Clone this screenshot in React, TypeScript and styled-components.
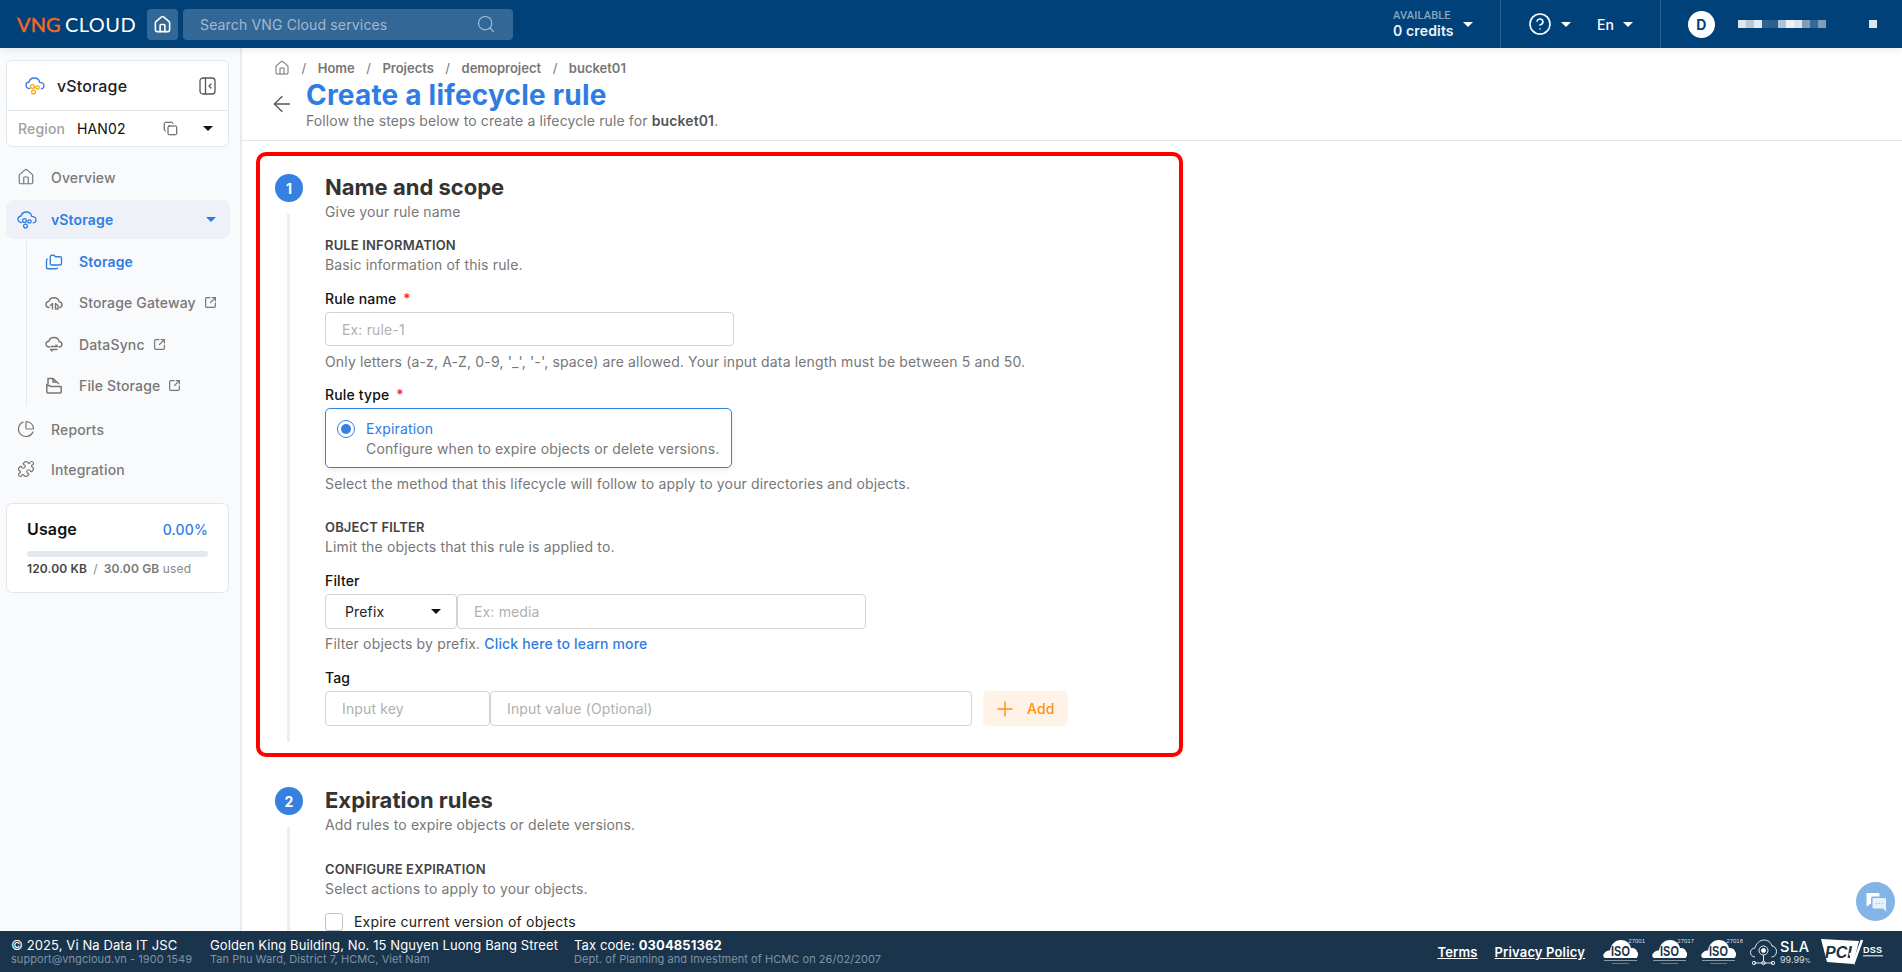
import React from "react";
import styled, { createGlobalStyle } from "styled-components";
import {
  ArrowLeft,
  ChartPie,
  CircleHelp,
  Copy,
  Folders,
  House,
  Plus,
  Puzzle,
  Search,
  SquareArrowOutUpRight,
} from "lucide-react";

const GlobalStyle = createGlobalStyle`
  html, body {
    margin: 0;
    padding: 0;
    height: 100%;
    overflow: hidden;
    background: #fff;
    font-family: Inter, "Noto Sans", sans-serif;
    letter-spacing: 0.15px;
    color: #333;
  }
  * { box-sizing: border-box; }
`;

const blurCells = ["#dfe6ee", "#b9c8d8", "#e5eaf0", "#2f6396", "#2b6090", "#b1c3d6", "#eef1f5", "#dbe3ec", "#7f9cb9", "#356895", "#7f9cb9"];

const VStorageIcon = ({ color = "#2f7de1", dots = "#f5a21b" }: { color?: string; dots?: string }) => (
  <svg width="20" height="20" viewBox="0 0 20 20" fill="none">
    <path d="M4.500 12.500C2.500 12.300 1 10.900 1 9.200 1 7.500 2.300 6.200 4 6 4.700 3.600 6.800 2 9.300 2c2.700 0 4.900 1.800 5.400 4.300 2.300 0 4.300 1.500 4.300 3.500 0 1.600-1.100 2.800-2.700 3" stroke={color} strokeWidth="1.300" strokeLinecap="round" />
    <circle cx="7.500" cy="10.500" r="1.900" stroke={dots} strokeWidth="1.300" />
    <circle cx="12.500" cy="11.500" r="1.700" stroke={dots} strokeWidth="1.300" />
    <circle cx="8.500" cy="16" r="1.900" stroke={dots} strokeWidth="1.300" />
  </svg>
);

const CollapseIcon = () => (
  <svg width="17" height="18" viewBox="0 0 17 18" fill="none" stroke="#555" strokeWidth="1.300">
    <rect x="1" y="1" width="15" height="16" rx="3" />
    <path d="M6.500 1v16" />
    <path d="M12 7l-2 2 2 2" strokeLinecap="round" strokeLinejoin="round" />
  </svg>
);

const GatewayIcon = () => (
  <svg width="18" height="18" viewBox="0 0 18 18" fill="none" stroke="#777" strokeWidth="1.400" strokeLinecap="round" strokeLinejoin="round">
    <path d="M4 13.500C2.300 13.300 1 12 1 10.400 1 8.800 2.300 7.500 3.900 7.400 4.500 5.200 6.500 3.700 8.900 3.700c2.700 0 4.900 1.800 5.300 4.100 1.600.2 2.800 1.400 2.800 3 0 1.400-.9 2.400-2.200 2.700" />
    <path d="M7.500 15V9.500l-2 2M10.500 9.500V15h2.500v-3.500z" />
  </svg>
);

const SyncIcon = () => (
  <svg width="18" height="18" viewBox="0 0 18 18" fill="none" stroke="#777" strokeWidth="1.400" strokeLinecap="round" strokeLinejoin="round">
    <path d="M4.500 12C2.500 12 1 10.700 1 9.100 1 7.500 2.300 6.300 3.900 6.200 4.500 4 6.500 2.500 8.900 2.500c2.700 0 4.900 1.800 5.300 4.100 1.600.2 2.800 1.300 2.800 2.700 0 1.500-1.200 2.700-3 2.700" />
    <path d="M6 11.500h6.500l-1.500-1.500M12 14.500H5.500l1.500 1.500" />
  </svg>
);

const FileStorageIcon = () => (
  <svg width="18" height="18" viewBox="0 0 18 18" fill="none" stroke="#777" strokeWidth="1.500" strokeLinejoin="round">
    <path d="M3 8V2.500h5L14 8" />
    <path d="M8 2.500V6h3.500" />
    <path d="M1.800 8.500 6 10.500h10.200v5.500a1 1 0 0 1-1 1H2.800a1 1 0 0 1-1-1z" />
  </svg>
);

const ChatIcon = () => (
  <svg width="22" height="20" viewBox="0 0 22 20">
    <path d="M1.500 1h12a1 1 0 0 1 1 1v2.500H8a2 2 0 0 0-2 2V12H5l-3.500 2.800V2a1 1 0 0 1 0-1z" fill="#fff" />
    <path d="M8.500 6h11.500a1 1 0 0 1 1 1v9.500l.5 3-3.500-3H8.500a1 1 0 0 1-1-1V7a1 1 0 0 1 1-1z" fill="#e8f1fb" />
    <circle cx="11.500" cy="11.500" r=".8" fill="#9cc2ec" />
    <circle cx="14.500" cy="11.500" r=".8" fill="#9cc2ec" />
    <circle cx="17.500" cy="11.500" r=".8" fill="#9cc2ec" />
  </svg>
);

const IsoBadge = ({ code }: { code: string }) => (
  <svg width="42" height="30" viewBox="0 0 42 30">
    <path d="M2.500 21C0 21-.5 17.500 1.500 16 3 14 5 13.500 7 13.500 8 7.500 12 3 18 3c5 0 9 3 10 8 3-.5 5.500 1 6 3.500 1.500 1 1.500 5-.5 6.500z" fill="#fff" />
    <text x="17.500" y="19" textAnchor="middle" fontFamily="'Liberation Sans', sans-serif" fontSize="15" fontWeight="700" fill="#1a344b" textLength="19" lengthAdjust="spacingAndGlyphs">ISO</text>
    <text x="42" y="6" textAnchor="end" fontFamily="'Liberation Sans', sans-serif" fontSize="6" fill="#d8dee4" letterSpacing="0">{code}</text>
    <rect x="1" y="23" width="33" height="1" fill="#8a9aa8" />
    <rect x="9" y="26" width="17" height="1" fill="#66798a" />
  </svg>
);

const SlaBadge = () => (
  <svg width="64" height="30" viewBox="0 0 64 30" fill="none" stroke="#fff" strokeWidth=".9">
    <path d="M5 20C2.500 20 .5 18 .5 15.500S2.500 11 5 11c1-4.500 5-8 9-8s7 2.500 8 6c2.500 0 4.500 2.500 4.500 5.500s-2 5.500-5 5.500" />
    <circle cx="13.500" cy="13.500" r="4.500" />
    <circle cx="13.500" cy="13.500" r="2" fill="#fff" />
    <path d="M13.500 18v6M4 26h19" />
    <circle cx="4" cy="26" r="1.700" />
    <circle cx="13.500" cy="26" r="1.700" />
    <circle cx="23" cy="26" r="1.700" />
    <text x="30" y="15" fontFamily="Inter, sans-serif" fontSize="14.500" fontWeight="500" fill="#fff" stroke="none" letterSpacing=".6">SLA</text>
    <text x="30" y="26" fontFamily="Inter, sans-serif" fontSize="9" fill="#d2dae1" stroke="none" letterSpacing="0">99.99<tspan fontSize="6">%</tspan></text>
  </svg>
);

const PciBadge = () => (
  <svg width="64" height="28" viewBox="0 0 64 28">
    <path d="M0 1 L38 3 L32 26 L6 24z" fill="#fff" />
    <text x="4" y="20" fontFamily="'Liberation Sans', sans-serif" fontSize="16" fontWeight="700" fontStyle="italic" fill="#1a344b" letterSpacing="0">PCI</text>
    <path d="M29 15l4 9 L41 2" stroke="#fff" strokeWidth="2.500" fill="none" />
    <text x="42" y="15" fontFamily="'Liberation Sans', sans-serif" fontSize="9" fontWeight="700" fill="#fff" letterSpacing=".2">DSS</text>
    <rect x="42" y="17" width="20" height="1.500" fill="#b6c1cb" />
  </svg>
);

export default function App() {
  return (
    <>
      <GlobalStyle />
      <Page>
        <TopBar>
          <Logo><LogoMark>VNG</LogoMark><LogoWord>CLOUD</LogoWord></Logo>
          <HomeButton><House size={19} strokeWidth={2} /></HomeButton>
          <SearchBox>
            <SearchText>Search VNG Cloud services</SearchText>
            <Search size={20} strokeWidth={1.4} color="#a9bfd4" />
          </SearchBox>
          <TopRight>
            <CreditBlock>
              <Credits>
                <CreditLabel>AVAILABLE</CreditLabel>
                <CreditValue>0 credits</CreditValue>
              </Credits>
              <Caret $color="#fff" $size={5} />
            </CreditBlock>
            <HelpBlock>
              <CircleHelp size={24} strokeWidth={1.6} color="#fff" />
              <Caret $color="#fff" $size={5} />
              <Lang>En</Lang>
              <Caret $color="#fff" $size={5} />
            </HelpBlock>
            <UserBlock>
              <Avatar>D</Avatar>
              <BlurName>
                {blurCells.map((c, i) => <BlurCell key={i} $color={c} />)}
              </BlurName>
              <BlurDot />
            </UserBlock>
          </TopRight>
        </TopBar>

        <Body>
          <Sidebar>
            <ServiceCard>
              <ServiceHead>
                <VStorageIcon />
                <ServiceName>vStorage</ServiceName>
                <CollapseIcon />
              </ServiceHead>
              <RegionRow>
                <RegionLabel>Region</RegionLabel>
                <RegionValue>HAN02</RegionValue>
                <CopyWrap><Copy size={15} strokeWidth={1.6} color="#444" /></CopyWrap>
                <Caret $color="#111" $size={5} />
              </RegionRow>
            </ServiceCard>

            <Nav>
              <NavItem><House size={18} strokeWidth={1.6} /><NavText>Overview</NavText></NavItem>
              <ActiveItem>
                <VStorageIcon dots="#2f7de1" />
                <ActiveText>vStorage</ActiveText>
                <Caret $color="#2f7de1" $size={5} />
              </ActiveItem>
              <SubNav>
                <SubItem $active><Folders size={18} strokeWidth={1.8} /><span>Storage</span></SubItem>
                <SubItem><GatewayIcon /><span>Storage Gateway</span><SquareArrowOutUpRight size={13} strokeWidth={2.2} /></SubItem>
                <SubItem><SyncIcon /><span>DataSync</span><SquareArrowOutUpRight size={13} strokeWidth={2.2} /></SubItem>
                <SubItem><FileStorageIcon /><span>File Storage</span><SquareArrowOutUpRight size={13} strokeWidth={2.2} /></SubItem>
              </SubNav>
              <NavItem><ChartPie size={18} strokeWidth={1.6} /><NavText>Reports</NavText></NavItem>
              <NavItem><Puzzle size={18} strokeWidth={1.6} /><NavText>Integration</NavText></NavItem>
            </Nav>

            <UsageCard>
              <UsageHead>
                <UsageTitle>Usage</UsageTitle>
                <UsagePercent>0.00%</UsagePercent>
              </UsageHead>
              <UsageBar />
              <UsageText><b>120.00 KB</b><i>/</i><em>30.00 GB</em> used</UsageText>
            </UsageCard>
          </Sidebar>

          <Main>
            <PageHead>
              <Breadcrumb>
                <House size={16} strokeWidth={1.6} />
                <Slash>/</Slash><span>Home</span>
                <Slash>/</Slash><span>Projects</span>
                <Slash>/</Slash><span>demoproject</span>
                <Slash>/</Slash><span>bucket01</span>
              </Breadcrumb>
              <TitleRow>
                <BackArrow><ArrowLeft size={26} strokeWidth={1.2} /></BackArrow>
                <div>
                  <PageTitle>Create a lifecycle rule</PageTitle>
                  <PageSub>Follow the steps below to create a lifecycle rule for <b>bucket01</b>.</PageSub>
                </div>
              </TitleRow>
            </PageHead>

            <StepFrame $highlight>
              <Rail>
                <StepNumber>1</StepNumber>
                <RailLine />
              </Rail>
              <StepBody>
                <StepTitle>Name and scope</StepTitle>
                <Help>Give your rule name</Help>

                <SectionLabel $top={13}>RULE INFORMATION</SectionLabel>
                <Help>Basic information of this rule.</Help>

                <FieldLabel $top={14}>Rule name<Required>*</Required></FieldLabel>
                <TextInput $width={409} $height={34} placeholder="Ex: rule-1" readOnly />
                <Hint $top={6}>Only letters (a-z, A-Z, 0-9, '_', '-', space) are allowed. Your input data length must be between 5 and 50.</Hint>

                <FieldLabel $top={13}>Rule type<Required>*</Required></FieldLabel>
                <RadioCard>
                  <RadioOuter><RadioDot /></RadioOuter>
                  <div>
                    <RadioTitle>Expiration</RadioTitle>
                    <RadioText>Configure when to expire objects or delete versions.</RadioText>
                  </div>
                </RadioCard>
                <Hint $top={6}>Select the method that this lifecycle will follow to apply to your directories and objects.</Hint>

                <SectionLabel $top={23}>OBJECT FILTER</SectionLabel>
                <Help>Limit the objects that this rule is applied to.</Help>

                <FieldLabel $top={14}>Filter</FieldLabel>
                <InputRow>
                  <SelectBox>
                    <span>Prefix</span>
                    <Caret $color="#111" $size={5} />
                  </SelectBox>
                  <TextInput $width={409} $height={35} placeholder="Ex: media" readOnly />
                </InputRow>
                <Hint $top={5}>Filter objects by prefix. <LearnLink>Click here to learn more</LearnLink></Hint>

                <FieldLabel $top={14}>Tag</FieldLabel>
                <InputRow>
                  <TextInput $width={165} $height={35} placeholder="Input key" readOnly />
                  <TextInput $width={482} $height={35} placeholder="Input value (Optional)" readOnly />
                  <AddButton><Plus size={24} strokeWidth={1.4} /><span>Add</span></AddButton>
                </InputRow>
              </StepBody>
            </StepFrame>

            <StepFrame $below>
              <Rail>
                <StepNumber>2</StepNumber>
                <RailLine />
              </Rail>
              <StepBody>
                <StepTitle>Expiration rules</StepTitle>
                <Help>Add rules to expire objects or delete versions.</Help>
                <SectionLabel $top={24}>CONFIGURE EXPIRATION</SectionLabel>
                <Help>Select actions to apply to your objects.</Help>
                <CheckRow>
                  <CheckBox />
                  <CheckText>Expire current version of objects</CheckText>
                </CheckRow>
              </StepBody>
            </StepFrame>
          </Main>
        </Body>

        <Footer>
          <FootCol $width={199}>
            <FootMain>© 2025, Vi Na Data IT JSC</FootMain>
            <FootSub>support@vngcloud.vn - 1900 1549</FootSub>
          </FootCol>
          <FootCol $width={364}>
            <FootMain>Golden King Building, No. 15 Nguyen Luong Bang Street</FootMain>
            <FootSub>Tan Phu Ward, District 7, HCMC, Viet Nam</FootSub>
          </FootCol>
          <FootCol $width={340}>
            <FootMain>Tax code: <b>0304851362</b></FootMain>
            <FootSub>Dept. of Planning and Investment of HCMC on 26/02/2007</FootSub>
          </FootCol>
          <FootRight>
            <FootLink>Terms</FootLink>
            <FootLink>Privacy Policy</FootLink>
            <Badges>
              <IsoBadge code="27001" />
              <IsoBadge code="27017" />
              <IsoBadge code="27018" />
              <SlaBadge />
              <PciBadge />
            </Badges>
          </FootRight>
        </Footer>

        <ChatBubble><ChatIcon /></ChatBubble>
      </Page>
    </>
  );
}

const Page = styled.div`
  position: relative;
  display: flex;
  flex-direction: column;
  width: 1902px;
  height: 972px;
  overflow: hidden;
`;

const TopBar = styled.header`
  display: flex;
  align-items: center;
  flex: 0 0 48px;
  background: #01417a;
  padding-left: 17px;
  box-shadow: 0 2px 8px rgba(0, 0, 0, 0.08);
  z-index: 2;
`;

const Logo = styled.div`
  display: flex;
  align-items: baseline;
  gap: 4px;
  width: 130px;
  font-family: Lato, sans-serif;
  font-size: 20px;
  line-height: 24px;
`;

const LogoMark = styled.span`
  color: #f26a21;
  font-weight: 400;
  -webkit-text-stroke: 0.4px #f26a21;
`;

const LogoWord = styled.span`
  color: #fff;
  font-weight: 400;
  letter-spacing: 0.5px;
`;

const HomeButton = styled.div`
  display: flex;
  align-items: center;
  justify-content: center;
  width: 31px;
  height: 31px;
  background: #336795;
  border-radius: 4px;
  color: #fff;
`;

const SearchBox = styled.div`
  display: flex;
  align-items: center;
  justify-content: space-between;
  width: 330px;
  height: 31px;
  margin-left: 5px;
  padding: 0 17px;
  background: #336795;
  border-radius: 4px;
`;

const SearchText = styled.span`
  font-size: 14px;
  color: #a3b9ce;
`;

const TopRight = styled.div`
  display: flex;
  align-items: stretch;
  height: 48px;
  margin-left: auto;
`;

const CreditBlock = styled.div`
  display: flex;
  align-items: center;
  gap: 9px;
  width: 108px;
  border-right: 1px solid #2d6394;
`;

const Credits = styled.div`
  display: flex;
  flex-direction: column;
`;

const CreditLabel = styled.span`
  font-family: Roboto, sans-serif;
  font-size: 11px;
  font-weight: 500;
  line-height: 13px;
  color: #8aa6c0;
`;

const CreditValue = styled.span`
  font-family: Inter, sans-serif;
  font-size: 14px;
  font-weight: 600;
  line-height: 18px;
  color: #eef3f7;
`;

const Caret = styled.span<{ $color: string; $size: number }>`
  display: inline-block;
  width: 0;
  height: 0;
  flex: none;
  border-left: ${(p) => p.$size}px solid transparent;
  border-right: ${(p) => p.$size}px solid transparent;
  border-top: ${(p) => p.$size}px solid ${(p) => p.$color};
`;

const HelpBlock = styled.div`
  display: flex;
  align-items: center;
  gap: 9px;
  width: 160px;
  padding-left: 27px;
  border-right: 1px solid #2d6394;
`;

const Lang = styled.span`
  margin-left: 17px;
  font-size: 14px;
  font-weight: 500;
  color: #fff;
`;

const UserBlock = styled.div`
  display: flex;
  align-items: center;
  width: 241px;
  padding-left: 27px;
`;

const Avatar = styled.div`
  display: flex;
  align-items: center;
  justify-content: center;
  width: 27px;
  height: 27px;
  border-radius: 50%;
  background: #fff;
  font-size: 14px;
  font-weight: 700;
  color: #01417a;
`;

const BlurName = styled.div`
  display: flex;
  margin-left: 23px;
`;

const BlurCell = styled.span<{ $color: string }>`
  width: 8px;
  height: 8px;
  background: ${(p) => p.$color};
`;

const BlurDot = styled.span`
  width: 8px;
  height: 8px;
  margin-left: 43px;
  background: #dfe6ee;
`;

const Body = styled.div`
  display: flex;
  flex: 1;
  min-height: 0;
`;

const Sidebar = styled.aside`
  flex: 0 0 242px;
  padding: 12px 0 0 6px;
  background: #f9fafc;
  border-right: 2px solid #e6ebf2;
`;

const ServiceCard = styled.div`
  width: 223px;
  height: 87px;
  background: #fff;
  border: 1px solid #e2e7ee;
  border-radius: 6px;
`;

const ServiceHead = styled.div`
  display: flex;
  align-items: center;
  height: 50px;
  padding: 0 12px 0 18px;
  border-bottom: 1px solid #e2e7ee;
`;

const ServiceName = styled.span`
  flex: 1;
  margin-left: 12px;
  font-size: 16px;
  font-weight: 500;
  color: #222;
`;

const RegionRow = styled.div`
  display: flex;
  align-items: center;
  height: 35px;
  padding: 0 15px 0 11px;
`;

const RegionLabel = styled.span`
  width: 59px;
  font-size: 14px;
  font-weight: 500;
  color: #a0a0a0;
`;

const RegionValue = styled.span`
  flex: 1;
  font-size: 14px;
  color: #111;
`;

const CopyWrap = styled.span`
  display: flex;
  margin-right: 25px;
`;

const Nav = styled.nav`
  display: flex;
  flex-direction: column;
  margin-top: 10px;
`;

const NavItem = styled.div`
  display: flex;
  align-items: center;
  gap: 16px;
  height: 40px;
  padding-left: 11px;
  color: #777;
`;

const NavText = styled.span`
  font-size: 14px;
  font-weight: 500;
  color: #7a7a7a;
`;

const ActiveItem = styled.div`
  display: flex;
  align-items: center;
  width: 224px;
  height: 39px;
  margin-top: 3px;
  padding: 0 14px 0 11px;
  background: #eef1f7;
  border-radius: 8px;
`;

const ActiveText = styled.span`
  flex: 1;
  margin-left: 14px;
  font-size: 14px;
  font-weight: 600;
  color: #2f7de1;
`;

const SubNav = styled.div`
  display: flex;
  flex-direction: column;
  height: 165px;
  margin: 2px 0 3px 20px;
  padding-left: 18px;
  border-left: 1px solid #e6e8ec;
`;

const SubItem = styled.div<{ $active?: boolean }>`
  display: flex;
  align-items: center;
  height: 41.5px;
  gap: 8px;
  color: ${(p) => (p.$active ? "#2f7de1" : "#777")};
  font-size: 14px;
  font-weight: ${(p) => (p.$active ? 600 : 500)};
  span {
    margin-left: 8px;
  }
`;

const UsageCard = styled.div`
  width: 223px;
  height: 90px;
  margin-top: 14px;
  padding: 15px 20px 0 20px;
  background: #fff;
  border: 1px solid #e2e7ee;
  border-radius: 6px;
`;

const UsageHead = styled.div`
  display: flex;
  align-items: center;
  justify-content: space-between;
  height: 20px;
`;

const UsageTitle = styled.span`
  font-size: 16px;
  font-weight: 600;
  color: #111;
`;

const UsagePercent = styled.span`
  font-size: 14px;
  font-weight: 500;
  color: #2f7de1;
`;

const UsageBar = styled.div`
  height: 6px;
  margin-top: 12px;
  background: #e3e7ef;
  border-radius: 3px;
`;

const UsageText = styled.div`
  margin-top: 4px;
  font-size: 12px;
  line-height: 16px;
  color: #888;
  b {
    font-weight: 600;
    color: #444;
  }
  i {
    font-style: normal;
    margin: 0 6px;
  }
  em {
    font-style: normal;
    font-weight: 600;
    color: #777;
  }
`;

const Main = styled.main`
  flex: 1;
  min-width: 0;
  overflow: hidden;
  background: #fff;
`;

const PageHead = styled.div`
  height: 93px;
  padding: 10px 0 0 32px;
  border-bottom: 1px solid #e3e5e8;
`;

const Breadcrumb = styled.div`
  display: flex;
  align-items: center;
  height: 20px;
  font-size: 13px;
  font-weight: 600;
  letter-spacing: 0;
  color: #777;
`;

const Slash = styled.span`
  margin: 0 11.5px;
  font-weight: 400;
`;

const TitleRow = styled.div`
  display: flex;
`;

const BackArrow = styled.div`
  flex: 0 0 37px;
  height: 26px;
  margin: 13px 0 0 -5px;
  color: #555;
`;

const PageTitle = styled.h1`
  margin: 1px 0 0;
  font-size: 28px;
  font-weight: 700;
  line-height: 32px;
  letter-spacing: 0.2px;
  color: #2f7de1;
`;

const PageSub = styled.p`
  margin: 0;
  font-size: 14px;
  line-height: 20px;
  letter-spacing: 0.12px;
  color: #777;
  b {
    font-weight: 600;
    color: #555;
  }
`;

const StepFrame = styled.section<{ $highlight?: boolean; $below?: boolean }>`
  display: flex;
  gap: 22px;
  width: 927px;
  margin: ${(p) => (p.$below ? "8px 0 0 14px" : "11px 0 0 14px")};
  padding: 18px 15px 11px;
  border: 4px solid ${(p) => (p.$highlight ? "#ff0000" : "transparent")};
  border-radius: 10px;
`;

const Rail = styled.div`
  display: flex;
  flex-direction: column;
  align-items: center;
  flex: 0 0 28px;
`;

const StepNumber = styled.div`
  display: flex;
  align-items: center;
  justify-content: center;
  width: 28px;
  height: 28px;
  border-radius: 50%;
  background: #3580e0;
  font-size: 14px;
  font-weight: 700;
  color: #fff;
`;

const RailLine = styled.div`
  flex: 1;
  width: 3px;
  margin: 12px 0 0 -1px;
  background: #eee;
`;

const StepBody = styled.div`
  flex: 1;
  min-width: 0;
  padding-bottom: 16px;
`;

const StepTitle = styled.h2`
  margin: -1px 0 1px;
  font-size: 22px;
  font-weight: 700;
  line-height: 28px;
  letter-spacing: 0;
  color: #333;
`;

const Help = styled.div`
  font-size: 14px;
  line-height: 20px;
  color: #777;
`;

const SectionLabel = styled.div<{ $top: number }>`
  margin-top: ${(p) => p.$top}px;
  font-size: 13px;
  font-weight: 600;
  line-height: 20px;
  color: #444;
`;

const FieldLabel = styled.div<{ $top: number }>`
  margin-top: ${(p) => p.$top}px;
  margin-bottom: 3px;
  font-size: 14px;
  font-weight: 500;
  line-height: 20px;
  color: #111;
`;

const Required = styled.span`
  margin-left: 7px;
  color: #f5222d;
`;

const TextInput = styled.input<{ $width: number; $height: number }>`
  display: block;
  width: ${(p) => p.$width}px;
  height: ${(p) => p.$height}px;
  padding: 0 16px;
  border: 1px solid #d3d3d3;
  border-radius: 4px;
  font-family: Inter, sans-serif;
  font-size: 14px;
  letter-spacing: 0.15px;
  outline: none;
  &::placeholder {
    color: #b0b0b0;
  }
`;

const Hint = styled.div<{ $top: number }>`
  margin-top: ${(p) => p.$top}px;
  font-size: 14px;
  line-height: 20px;
  color: #777;
`;

const RadioCard = styled.div`
  display: flex;
  gap: 11px;
  width: 407px;
  height: 60px;
  padding: 10px 11px;
  border: 1px solid #3580e0;
  border-radius: 5px;
  box-shadow: 0 2px 6px rgba(0, 0, 0, 0.08);
`;

const RadioOuter = styled.div`
  display: flex;
  align-items: center;
  justify-content: center;
  flex: none;
  width: 18px;
  height: 18px;
  margin-top: 1px;
  border: 1.5px solid #3580e0;
  border-radius: 50%;
`;

const RadioDot = styled.div`
  width: 10px;
  height: 10px;
  border-radius: 50%;
  background: #3580e0;
`;

const RadioTitle = styled.div`
  font-size: 14px;
  line-height: 20px;
  color: #2f7de1;
`;

const RadioText = styled.div`
  font-size: 14px;
  line-height: 20px;
  color: #777;
`;

const InputRow = styled.div`
  display: flex;
  align-items: center;
`;

const SelectBox = styled.div`
  display: flex;
  align-items: center;
  justify-content: space-between;
  width: 132px;
  height: 35px;
  padding: 0 15px 0 19px;
  border: 1px solid #d3d3d3;
  border-radius: 4px;
  font-size: 14px;
  color: #222;
`;

const LearnLink = styled.a`
  color: #2f7de1;
  font-weight: 500;
`;

const AddButton = styled.div`
  display: flex;
  align-items: center;
  gap: 10px;
  width: 85px;
  height: 35px;
  margin-left: 11px;
  padding-left: 10px;
  background: #fef3e6;
  border-radius: 5px;
  color: #ff9013;
  font-size: 14px;
  font-weight: 500;
`;

const CheckRow = styled.div`
  display: flex;
  align-items: center;
  gap: 11px;
  margin-top: 14px;
`;

const CheckBox = styled.div`
  width: 18px;
  height: 18px;
  border: 1px solid #c4c4c4;
  border-radius: 3px;
`;

const CheckText = styled.span`
  font-size: 14px;
  line-height: 18px;
  letter-spacing: 0.2px;
  color: #222;
`;

const Footer = styled.footer`
  display: flex;
  align-items: center;
  flex: 0 0 41px;
  padding-left: 11px;
  background: #1a344b;
  z-index: 1;
`;

const FootCol = styled.div<{ $width: number }>`
  display: flex;
  flex-direction: column;
  width: ${(p) => p.$width}px;
  flex: none;
`;

const FootMain = styled.span`
  font-size: 13px;
  line-height: 16px;
  letter-spacing: 0.1px;
  color: #fff;
  b {
    font-weight: 700;
  }
`;

const FootSub = styled.span`
  font-size: 11px;
  line-height: 13px;
  letter-spacing: 0.05px;
  color: #7f93a6;
`;

const FootRight = styled.div`
  display: flex;
  align-items: center;
  margin-left: auto;
  padding-right: 17px;
`;

const FootLink = styled.a`
  margin-right: 17px;
  font-size: 13px;
  font-weight: 600;
  color: #fff;
  text-decoration: underline;
`;

const Badges = styled.div`
  display: flex;
  align-items: center;
  gap: 7px;
  margin-left: 1px;
`;

const ChatBubble = styled.div`
  position: absolute;
  right: 7px;
  bottom: 51px;
  display: flex;
  align-items: center;
  justify-content: center;
  width: 39px;
  height: 39px;
  border-radius: 50%;
  background: #82b4e8;
`;
